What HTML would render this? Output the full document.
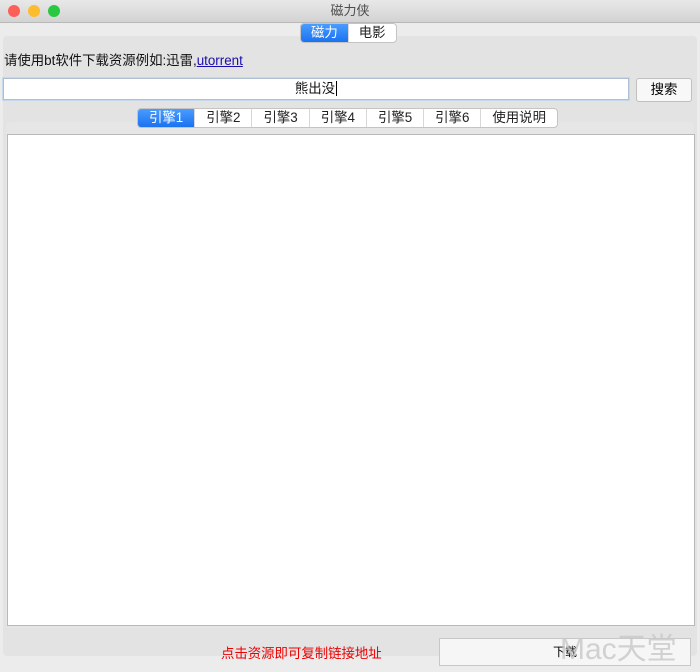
<!DOCTYPE html>
<html><head><meta charset="utf-8"><style>
body{margin:0;width:700px;height:672px;background:#ececec;font-family:"Liberation Sans","Noto Sans CJK SC",sans-serif;font-size:13.4px;position:relative;overflow:hidden}
.tb{position:absolute;left:0;top:0;width:700px;height:22px;background:linear-gradient(#e8e8e8,#d3d3d3);border-bottom:1px solid #b8b8b8;text-align:center;line-height:22px;color:#4c4c4c;font-size:13px}
.d{position:absolute;top:5px;width:12px;height:12px;border-radius:6px}
.seg{position:absolute;display:flex;border:1px solid #c4c4c4;border-radius:4px;background:#fff;overflow:hidden;height:18px;line-height:18px;font-size:13.4px}
.seg div{padding:0 11px;border-right:1px solid #d8d8d8;color:#222}
.seg div.on{background:linear-gradient(#4a9cff,#1a72f0);color:#fff}
.a{position:absolute}
</style></head><body>
<div class="tb">磁力侠</div>
<div class="d" style="left:8px;background:#fc5f57"></div>
<div class="d" style="left:28px;background:#fdbc2e"></div>
<div class="d" style="left:48px;background:#28c840"></div>
<div class="a" style="left:3px;top:36px;width:694px;height:620px;background:#e3e3e3;border-radius:4px"></div>
<div class="seg" style="left:300px;top:23px"><div class="on" style="padding:0 10px">磁力</div><div style="border:0;padding:0 10px">电影</div></div>
<div class="a" style="left:4px;top:49px;color:#111">请使用bt软件下载资源例如:迅雷,<span style="color:#1a0dab;text-decoration:underline">utorrent</span></div>
<div class="a" style="left:3px;top:78px;width:624px;height:20px;background:#fff;border:1px solid #aebfd3;box-shadow:0 0 0 1px #c8d8ec;text-align:center;line-height:20px;color:#111">熊出没<span style="border-left:1px solid #000;margin-left:1px"></span></div>
<div class="a" style="left:636px;top:78px;width:54px;height:22px;background:#f8f8f8;border:1px solid #c0c0c0;border-radius:3px;text-align:center;line-height:22px">搜索</div>
<div class="a" style="left:6px;top:122px;width:688px;height:506px;background:#e6e6e6;border-radius:4px"></div>
<div class="a" style="left:7px;top:134px;width:686px;height:490px;background:#fff;border:1px solid #b8b8b8"></div>
<div class="seg" style="left:137px;top:108px"><div class="on">引擎1</div><div>引擎2</div><div>引擎3</div><div>引擎4</div><div>引擎5</div><div>引擎6</div><div style="border:0">使用说明</div></div>
<div class="a" style="left:221px;top:642px;color:#e00">点击资源即可复制链接地址</div>
<div class="a" style="left:439px;top:638px;width:250px;height:26px;background:#f6f6f6;border:1px solid #c8c8c8;text-align:center;line-height:26px;font-size:12px">下载</div>
<div class="a" style="left:560px;top:624px;font-size:30px;color:#c8c8c8;opacity:.8">Mac天堂</div>
</body></html>
